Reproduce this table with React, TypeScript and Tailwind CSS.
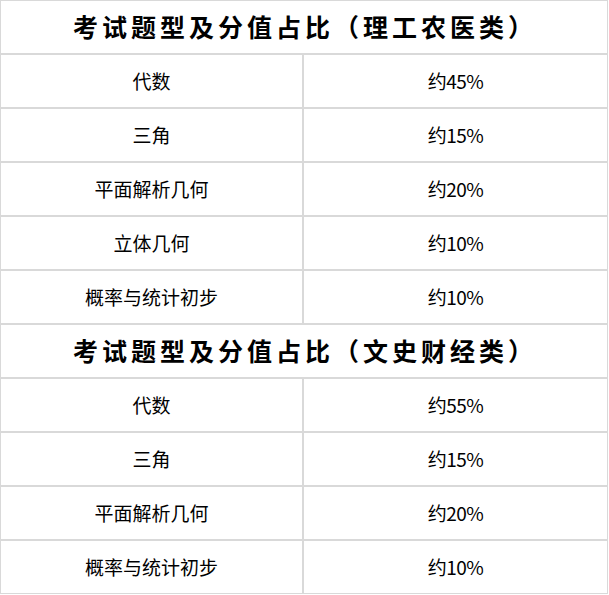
import React from 'react';

const sections = [
  {
    title: '考试题型及分值占比（理工农医类）',
    rows: [
      ['代数', '约45%'],
      ['三角', '约15%'],
      ['平面解析几何', '约20%'],
      ['立体几何', '约10%'],
      ['概率与统计初步', '约10%'],
    ],
  },
  {
    title: '考试题型及分值占比（文史财经类）',
    rows: [
      ['代数', '约55%'],
      ['三角', '约15%'],
      ['平面解析几何', '约20%'],
      ['概率与统计初步', '约10%'],
    ],
  },
];

export default function App(){
  return (
    <div className="w-[609px] h-[595px] bg-white text-black" style={{ fontFamily: '"Noto Sans CJK SC", "Noto Sans", sans-serif' }}>
      <div className="grid grid-cols-[303px_305px] w-[608px]">
        {sections.map(s => (
          <React.Fragment key={s.title}>
            <div className="col-span-2 h-[54px] border border-[#d9d9d9] flex items-center justify-center text-[25px] font-bold tracking-[4px] pl-[2px]">
              {s.title}
            </div>
            {s.rows.map(r => (
              <React.Fragment key={s.title + r[0]}>
                <div className="h-[54px] border border-[#d9d9d9] flex items-center justify-center text-[19px]">{r[0]}</div>
                <div className="h-[54px] border border-[#d9d9d9] flex items-center justify-center text-[19px] tracking-[-0.5px]">{r[1]}</div>
              </React.Fragment>
            ))}
          </React.Fragment>
        ))}
      </div>
    </div>
  );
}
